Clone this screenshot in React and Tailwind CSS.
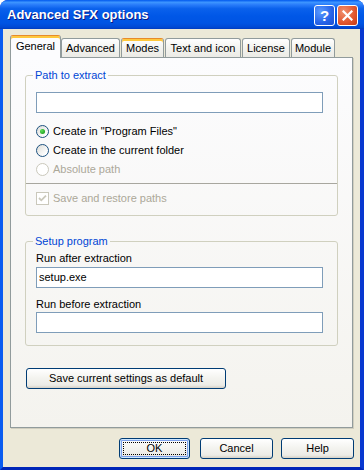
import React from 'react';

// ─── XP bits ────────────────────────────────────────────────────────────────
function Radio({ checked, disabled, label }) {
  return (
    <div className="flex items-center h-[19px] gap-[4px]">
      <span
        className={`w-[13px] h-[13px] rounded-full border flex items-center justify-center ${
          disabled ? 'border-[#CAC8BB] bg-white' : 'border-[#1C5180] bg-[linear-gradient(135deg,#DCDCD7,#FFFFFF_80%)]'
        }`}
      >
        {checked && <span className="w-[5px] h-[5px] rounded-full bg-[radial-gradient(circle_at_35%_35%,#5FE05B,#21A121_75%)]" />}
      </span>
      <span className={disabled ? 'text-[#ACA899]' : 'text-black'}>{label}</span>
    </div>
  );
}

function TextBox({ value = '' }) {
  return (
    <div className="h-[21px] border border-[#7F9DB9] bg-white flex items-center px-[2px] text-black">{value}</div>
  );
}

function XpButton({ children, className = '', isDefault }) {
  return (
    <div
      className={`relative h-[21px] rounded-[3px] border border-[#003C74] bg-[linear-gradient(to_bottom,#FFFFFF,#F4F4F0_45%,#ECEBE6_85%,#D6D0C5)] flex items-center justify-center text-black ${
        isDefault ? 'shadow-[inset_0_0_0_1px_#CEE7FF,inset_0_0_0_2px_#7EA2EC]' : ''
      } ${className}`}
    >
      {isDefault && <span className="absolute inset-[3px] border border-dotted border-black" />}
      {children}
    </div>
  );
}

function GroupBox({ title, children }) {
  return (
    <fieldset className="border border-[#D0D0BF] rounded-[3px] min-w-0">
      <legend className="ml-[7px] px-[2px] leading-[13px] text-[#0046D5]">{title}</legend>
      {children}
    </fieldset>
  );
}

const tabs = [
  { label: 'General', w: 'w-[51px]', ml: '', selected: true },
  { label: 'Advanced', w: 'w-[59px]', ml: '' },
  { label: 'Modes', w: 'w-[43px]', ml: 'ml-[1px]', hot: true },
  { label: 'Text and icon', w: 'w-[76px]', ml: 'ml-[1px]' },
  { label: 'License', w: 'w-[48px]', ml: 'ml-[1px]' },
  { label: 'Module', w: 'w-[44px]', ml: 'ml-[1px]' },
];

function Tab({ tab }) {
  if (tab.selected) {
    return (
      <div
        className={`${tab.w} ${tab.ml} relative z-10 -mb-px h-[23px] rounded-t-[3px] border-x border-t border-[#919B9C] border-t-[#E68B2C] shadow-[inset_0_2px_0_#FFC83C] bg-[#FCFCFE] flex items-center justify-center pb-[2px]`}
      >
        {tab.label}
      </div>
    );
  }
  return (
    <div
      className={`${tab.w} ${tab.ml} h-[19px] rounded-t-[3px] border-x border-t border-[#919B9C] bg-[linear-gradient(to_bottom,#FFFFFF,#F3F3EF_50%,#ECEBE6)] flex items-center justify-center pt-[1px] ${
        tab.hot ? 'border-t-[#E68B2C] shadow-[inset_0_2px_0_#FFC83C]' : ''
      }`}
    >
      {tab.label}
    </div>
  );
}

// ─── Dialog ─────────────────────────────────────────────────────────────────
export default function App() {
  return (
    <div className="w-[364px] h-[470px] flex flex-col rounded-t-[8px] overflow-hidden bg-[#0831D9] font-['Liberation_Sans',Arial,sans-serif] text-[11px] text-black">
      {/* title bar */}
      <div className="h-[29px] flex items-start bg-[linear-gradient(to_bottom,#0058EE,#3D95FF_8%,#2A7DFA_16%,#0A61EC_30%,#0057E7_55%,#0054E3_80%,#0049D4_94%,#003CBE)]">
        <div className="flex-1 pl-[7px] pt-[7px] text-[13px] font-bold text-white leading-[16px] [text-shadow:1px_1px_0_#0A1883]">
          Advanced SFX options
        </div>
        <div className="flex gap-[2px] pt-[5px] pr-[6px]">
          <div className="w-[21px] h-[21px] rounded-[3px] border border-white bg-[radial-gradient(circle_at_30%_30%,#5A9BFF,#2663E8_60%,#1A4FD0)] flex items-center justify-center text-white font-bold text-[15px] leading-none">
            ?
          </div>
          <div className="w-[21px] h-[21px] rounded-[3px] border border-white bg-[radial-gradient(circle_at_30%_30%,#F0906E,#E0552D_60%,#C43A14)] flex items-center justify-center">
            <svg width="11" height="11" viewBox="0 0 11 11">
              <path d="M1.5 1.5l8 8M9.5 1.5l-8 8" stroke="white" strokeWidth="2.2" strokeLinecap="square" />
            </svg>
          </div>
        </div>
      </div>

      {/* frame + body */}
      <div className="flex-1 flex border-l-[3px] border-l-[#0A5CF0] border-r-[4px] border-r-[#0838D0] border-b-[3px] border-b-[#0026B8]">
        <div className="flex-1 bg-[#ECE9D8] flex flex-col pt-[6px] px-[7px]">
          <div className="h-[22px] flex items-end">
            {tabs.map(t => (
              <Tab key={t.label} tab={t} />
            ))}
          </div>

          {/* tab panel */}
          <div className="h-[371px] border border-[#919B9C] bg-[linear-gradient(to_bottom,#FCFCFE,#F4F3EE)] shadow-[1px_1px_0_#D0CEBF] px-[14px] pt-[11px]">
            <GroupBox title="Path to extract">
              <div className="pt-[10px] pl-[10px] pr-[14px] pb-[4px]">
                <TextBox />
                <div className="mt-[9px]">
                  <Radio checked label={'Create in "Program Files"'} />
                  <Radio label="Create in the current folder" />
                  <Radio disabled label="Absolute path" />
                </div>
              </div>
              <div className="h-px bg-[#A8A79F]" />
              <div className="pt-[5px] pb-[7px] pl-[10px]">
                <div className="flex items-center h-[19px] gap-[4px]">
                  <span className="w-[13px] h-[13px] border border-[#CAC8BB] bg-white flex items-center justify-center">
                    <svg width="9" height="9" viewBox="0 0 9 9">
                      <path d="M1 4l2.3 2.3L8 1.6" stroke="#CAC8BB" strokeWidth="1.8" fill="none" />
                    </svg>
                  </span>
                  <span className="text-[#ACA899]">Save and restore paths</span>
                </div>
              </div>
            </GroupBox>

            <div className="mt-[19px]">
              <GroupBox title="Setup program">
                <div className="pt-[4px] pl-[10px] pr-[14px] pb-[12px]">
                  <div className="leading-[13px]">Run after extraction</div>
                  <div className="mt-[2px]">
                    <TextBox value="setup.exe" />
                  </div>
                  <div className="mt-[10px] leading-[13px]">Run before extraction</div>
                  <div className="mt-[1px]">
                    <TextBox />
                  </div>
                </div>
              </GroupBox>
            </div>

            <XpButton className="mt-[22px] ml-px w-[200px]">Save current settings as default</XpButton>
          </div>

          {/* dialog buttons */}
          <div className="mt-[10px] -mr-px flex justify-end">
            <XpButton isDefault className="w-[71px]">OK</XpButton>
            <XpButton className="w-[73px] ml-[10px]">Cancel</XpButton>
            <XpButton className="w-[73px] ml-[8px]">Help</XpButton>
          </div>
        </div>
      </div>
    </div>
  );
}
